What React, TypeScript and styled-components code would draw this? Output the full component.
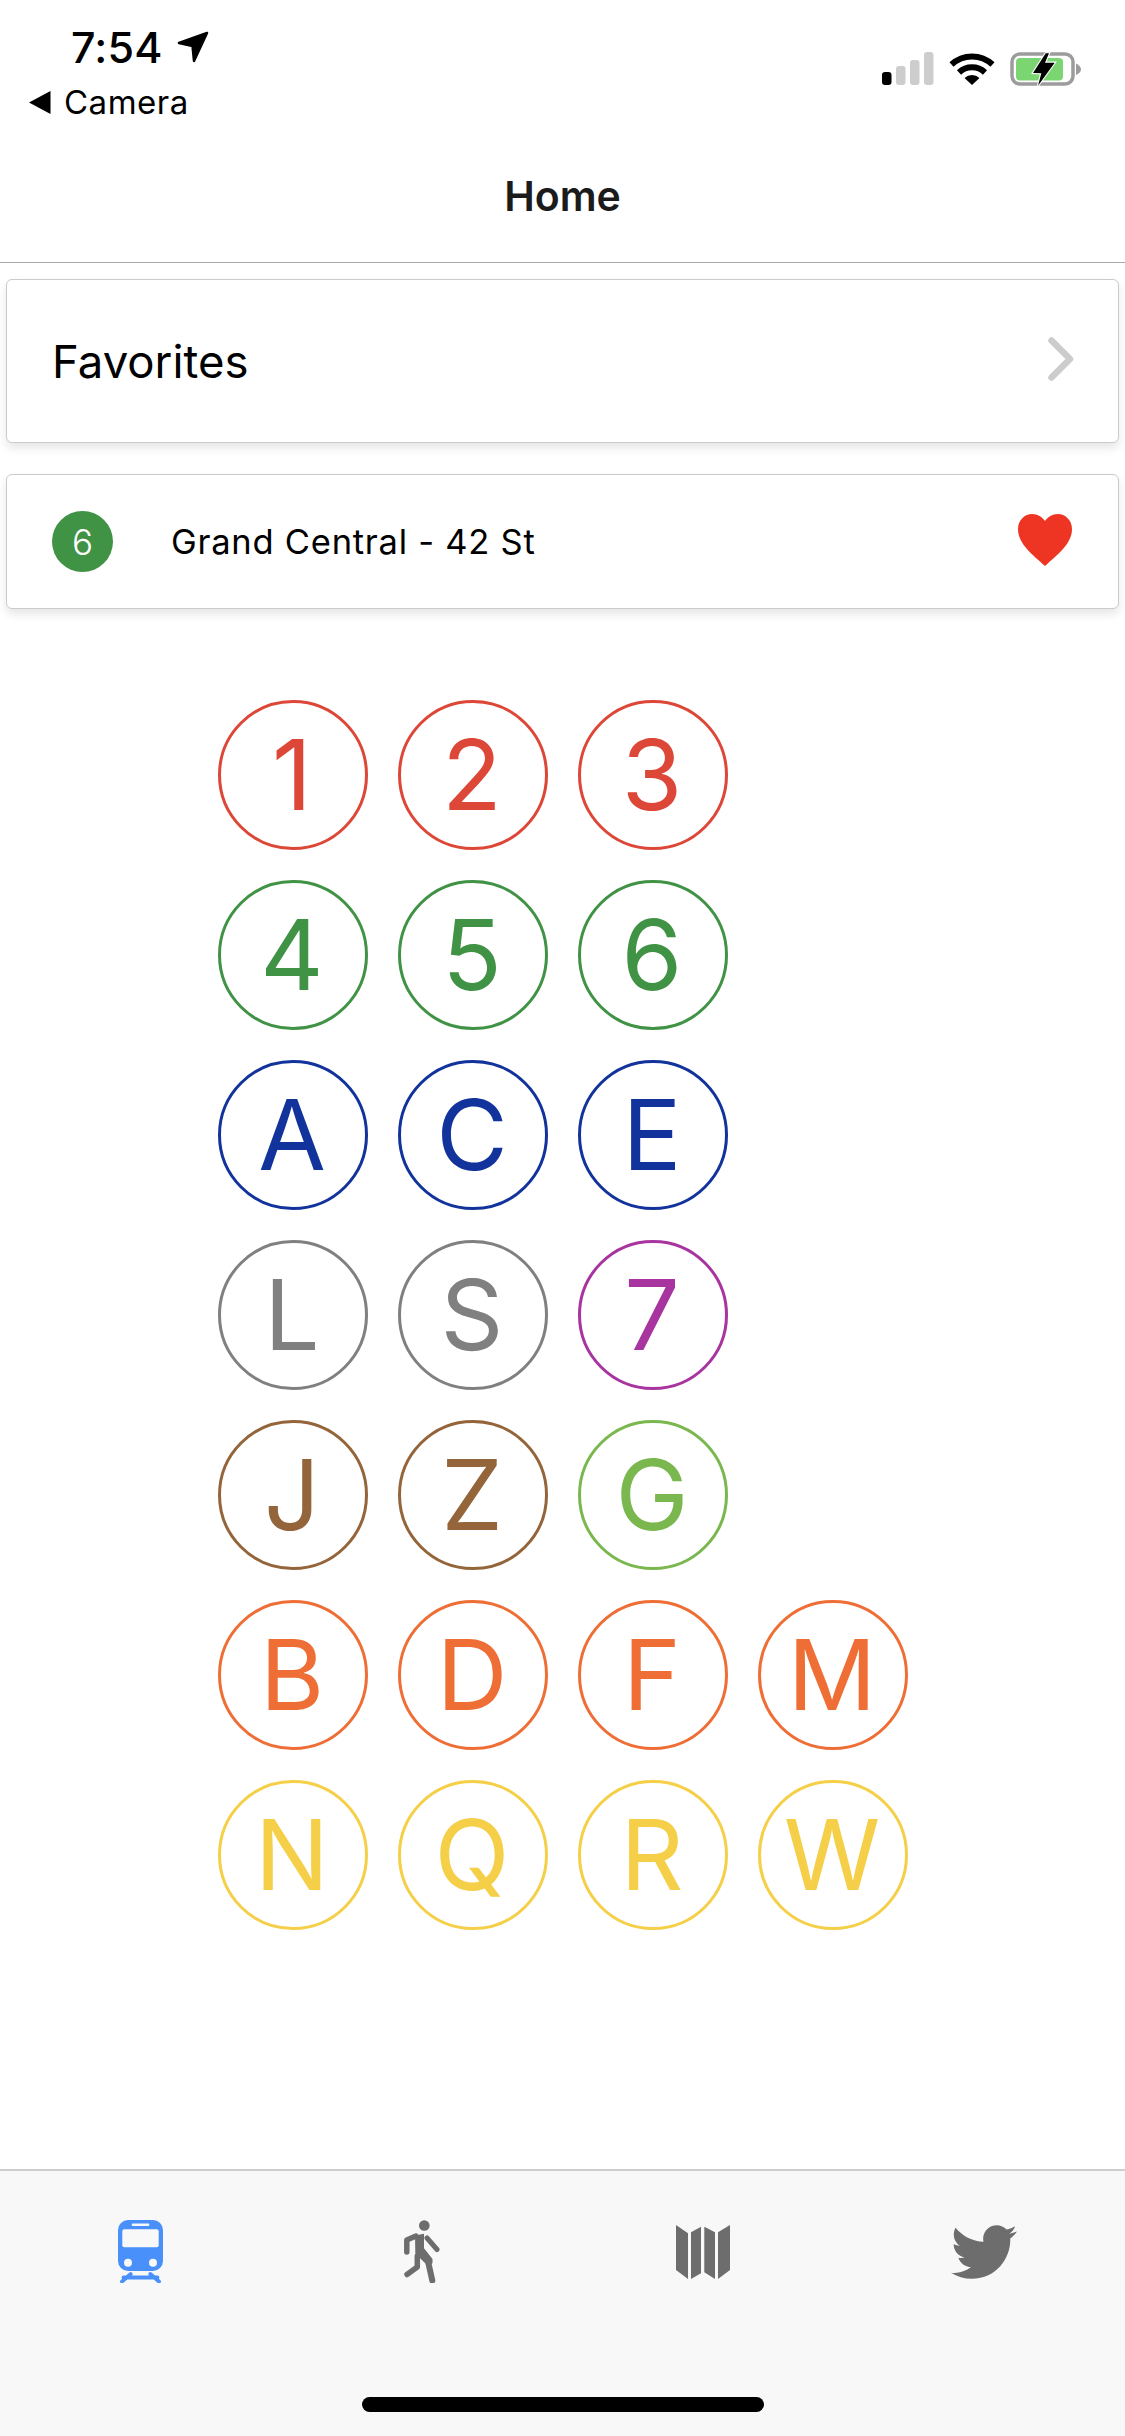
import React from "react";
import styled, { createGlobalStyle } from "styled-components";
import { FaTwitter } from "react-icons/fa";

const Global = createGlobalStyle`
  html, body { margin: 0; padding: 0; background: #fff; }
  body { font-family: Inter, "Liberation Sans", sans-serif; color: #000; }
`;

const Screen = styled.div`
  width: 1125px;
  height: 2436px;
  display: flex;
  flex-direction: column;
  overflow: hidden;
  background: #fff;
`;

const StatusBar = styled.div`
  height: 130px;
  display: flex;
  justify-content: space-between;
`;

const StatusLeft = styled.div`
  display: flex;
  flex-direction: column;
  padding: 21px 0 0 29px;
`;

const TimeRow = styled.div`
  display: flex;
  align-items: center;
  gap: 14px;
  height: 52px;
  padding-left: 42px;
`;

const Time = styled.span`
  font-size: 43px;
  font-weight: 550;
  letter-spacing: 0.2px;
  line-height: 52px;
`;

const BackRow = styled.div`
  display: flex;
  align-items: center;
  gap: 13px;
  height: 44px;
  margin-top: 7px;
`;

const BackLabel = styled.span`
  font-size: 33px;
  font-weight: 400;
  letter-spacing: 0.5px;
  line-height: 44px;
`;

const StatusRight = styled.div`
  display: flex;
  align-items: flex-start;
  gap: 15px;
  padding: 52px 41px 0 0;
`;

const Header = styled.header`
  height: 133px;
  display: flex;
  align-items: center;
  justify-content: center;
  border-bottom: 1.5px solid #a9a9a9;
  box-sizing: border-box;
`;

const Title = styled.h1`
  margin: 0;
  font-size: 41px;
  font-weight: 600;
  color: #1b1b1b;
`;

const Main = styled.main`
  flex: 1;
  display: flex;
  flex-direction: column;
  padding: 16px 6px 0;
`;

const Card = styled.div<{ $height: number; $gap: number }>`
  height: ${(p) => p.$height}px;
  margin-bottom: ${(p) => p.$gap}px;
  box-sizing: border-box;
  display: flex;
  align-items: center;
  background: #fff;
  border: 1.5px solid #cbcbcb;
  border-radius: 6px;
  box-shadow: 0 5px 10px rgba(0, 0, 0, 0.1);
`;

const FavoritesLabel = styled.span`
  flex: 1;
  padding-left: 45px;
  font-size: 45.5px;
  font-weight: 400;
`;

const Chevron = styled.svg`
  margin-right: 44px;
  margin-top: -4px;
`;

const Badge = styled.div`
  width: 61px;
  height: 61px;
  margin-left: 45px;
  border-radius: 50%;
  background: #409245;
  color: #fff;
  display: flex;
  align-items: center;
  justify-content: center;
  font-size: 35px;
  font-weight: 300;
`;

const StationName = styled.span`
  flex: 1;
  padding-left: 58px;
  font-size: 34.5px;
  letter-spacing: 0.75px;
  font-weight: 400;
`;

const Heart = styled.svg`
  margin-right: 46px;
  margin-top: -4px;
`;

const LineGrid = styled.div`
  display: flex;
  flex-direction: column;
  gap: 30px;
  padding: 91px 0 0 212px;
`;

const LineRow = styled.div`
  display: flex;
  gap: 30px;
`;

const LineCircle = styled.div<{ $color: string }>`
  width: 150px;
  height: 150px;
  box-sizing: border-box;
  padding-right: 2px;
  border-radius: 50%;
  border: 3px solid ${(p) => p.$color};
  color: ${(p) => p.$color};
  display: flex;
  align-items: center;
  justify-content: center;
  font-family: Inter, "Liberation Sans", sans-serif;
  font-size: 98px;
  font-weight: 430;
  line-height: 1;
`;

const TabBar = styled.nav`
  height: 267px;
  box-sizing: border-box;
  border-top: 2px solid #cdcdcd;
  background: #f8f8f8;
  display: flex;
  flex-direction: column;
`;

const TabRow = styled.div`
  display: grid;
  grid-template-columns: repeat(4, 1fr);
  height: 226px;
  padding-top: 49px;
  box-sizing: border-box;
`;

const Tab = styled.div`
  display: flex;
  justify-content: center;
  align-items: center;
  height: 63px;
  color: #6d6d6d;
`;

const HomeIndicator = styled.div`
  width: 402px;
  height: 15px;
  border-radius: 8px;
  background: #000;
  align-self: center;
`;

const LINES: { label: string; color: string }[][] = [
  [{ label: "1", color: "#dd4738" }, { label: "2", color: "#dd4738" }, { label: "3", color: "#dd4738" }],
  [{ label: "4", color: "#409245" }, { label: "5", color: "#409245" }, { label: "6", color: "#409245" }],
  [{ label: "A", color: "#12339b" }, { label: "C", color: "#12339b" }, { label: "E", color: "#12339b" }],
  [{ label: "L", color: "#808080" }, { label: "S", color: "#808080" }, { label: "7", color: "#a8359f" }],
  [{ label: "J", color: "#94653a" }, { label: "Z", color: "#94653a" }, { label: "G", color: "#7ab84f" }],
  [{ label: "B", color: "#ef6e36" }, { label: "D", color: "#ef6e36" }, { label: "F", color: "#ef6e36" }, { label: "M", color: "#ef6e36" }],
  [{ label: "N", color: "#f4cf47" }, { label: "Q", color: "#f4cf47" }, { label: "R", color: "#f4cf47" }, { label: "W", color: "#f4cf47" }],
];

const LocationArrow = () => (
  <svg width="32" height="32" viewBox="0 0 32 32">
    <path d="M30 2 L2 12 L15.5 15 L17 30 Z" fill="#000" stroke="#000" strokeWidth="2.5" strokeLinejoin="round" />
  </svg>
);

const BackTriangle = () => (
  <svg width="22" height="23" viewBox="0 0 22 23">
    <path d="M21.5 0 L0 11.5 L21.5 23 Z" fill="#000" />
  </svg>
);

const Signal = () => (
  <svg width="52" height="33" viewBox="0 0 52 33">
    <rect x="0" y="20" width="9.5" height="13" rx="3" fill="#000" />
    <rect x="14" y="14" width="9.5" height="19" rx="3" fill="#cdcdcd" />
    <rect x="28" y="8" width="9.5" height="25" rx="3" fill="#cdcdcd" />
    <rect x="42" y="0" width="9.5" height="33" rx="3" fill="#cdcdcd" />
  </svg>
);

const Wifi = () => (
  <svg width="46" height="33" viewBox="0 0 46 33">
    <path d="M2.5 12.5 A 30 30 0 0 1 43.5 12.5" fill="none" stroke="#000" strokeWidth="6" />
    <path d="M10 20.5 A 19 19 0 0 1 36 20.5" fill="none" stroke="#000" strokeWidth="6" />
    <path d="M15.5 26 A 11 11 0 0 1 30.5 26 L23 33 Z" fill="#000" />
  </svg>
);

const Battery = () => (
  <svg width="74" height="35" viewBox="0 0 74 35">
    <rect x="2" y="2" width="61" height="30" rx="8" fill="none" stroke="#9c9c9c" strokeWidth="3.5" />
    <rect x="6" y="6" width="47" height="22.5" rx="4" fill="#7bd672" />
    <path d="M66 11.5 L66 23 Q 71 20.5 71 17.5 Q 71 14 66 11.5 Z" fill="#9c9c9c" />
    <path
      d="M35.7 1.3 L23 21 L31.3 21.3 L28 33.7 L44.7 10.7 L35 10.7 L39 1.3 Z"
      fill="#000"
      stroke="#fff"
      strokeWidth="2.2"
      strokeLinejoin="miter"
      paintOrder="stroke"
    />
  </svg>
);

const TrainIcon = () => (
  <svg width="45" height="63" viewBox="0 0 45 63">
    <rect x="0" y="0" width="45" height="51" rx="10" fill="#4a90fb" />
    <rect x="4.3" y="9.3" width="36.4" height="18" rx="2" fill="#f8f8f8" />
    <rect x="13.7" y="3.5" width="17.6" height="2.4" rx="1" fill="#f8f8f8" />
    <circle cx="10" cy="42.7" r="4" fill="#f8f8f8" />
    <circle cx="35" cy="42.7" r="4" fill="#f8f8f8" />
    <path d="M5.5 57.5 H39.5 M12.7 54 L4 61.5 M32.3 54 L41 61.5" fill="none" stroke="#4a90fb" strokeWidth="3.8" strokeLinecap="round" />
  </svg>
);

const WalkIcon = () => (
  <svg width="36" height="63" viewBox="0 0 36 63" fill="none" stroke="#6d6d6d" strokeLinecap="round" strokeLinejoin="round">
    <circle cx="20.3" cy="5.5" r="5.3" fill="#6d6d6d" stroke="none" />
    <path d="M11 15.5 L20 13.7 L20 28.3 L28.5 39 L28.5 43 L24.5 46.5 L11.3 33.5 Z" fill="#6d6d6d" stroke="none" />
    <path d="M12 16 L2.8 20 L2.8 32" strokeWidth="5.5" />
    <path d="M23 18 L33 29.5" strokeWidth="5" />
    <path d="M24.5 43.5 L28.3 60.5" strokeWidth="6" />
    <path d="M13.3 36 L13.3 47 L3 54.5" strokeWidth="5.5" />
  </svg>
);

const MapIcon = () => (
  <svg width="54" height="54" viewBox="0 0 54 54" fill="#6d6d6d">
    <path d="M0 0 L12 8.3 L12 54 L0 45 Z" />
    <path d="M15 7.3 L25 1.7 L25 48.3 L15 54 Z" />
    <path d="M28.3 1.7 L39 7.3 L39 54 L28.3 47.3 Z" />
    <path d="M42 7.3 L54 0 L54 45 L42 54 Z" />
  </svg>
);

export default function App() {
  return (
    <Screen>
      <Global />
      <StatusBar>
        <StatusLeft>
          <TimeRow>
            <Time>7:54</Time>
            <LocationArrow />
          </TimeRow>
          <BackRow>
            <BackTriangle />
            <BackLabel>Camera</BackLabel>
          </BackRow>
        </StatusLeft>
        <StatusRight>
          <Signal />
          <Wifi />
          <Battery />
        </StatusRight>
      </StatusBar>
      <Header>
        <Title>Home</Title>
      </Header>
      <Main>
        <Card $height={164} $gap={31}>
          <FavoritesLabel>Favorites</FavoritesLabel>
          <Chevron width="26" height="44" viewBox="0 0 26 44">
            <path d="M3.5 3.5 L22 22 L3.5 40.5" fill="none" stroke="#cccccc" strokeWidth="6.5" strokeLinecap="round" strokeLinejoin="round" />
          </Chevron>
        </Card>
        <Card $height={135} $gap={0}>
          <Badge>6</Badge>
          <StationName>Grand Central - 42 St</StationName>
          <Heart width="54" height="52" viewBox="0 0 54 52">
            <path d="M27 52 C15 41 0 30 0 15 C0 6 7 0 14 0 C20 0 24 3 27 7 C30 3 34 0 40 0 C47 0 54 6 54 15 C54 30 39 41 27 52 Z" fill="#ee3524" />
          </Heart>
        </Card>
        <LineGrid>
          {LINES.map((row, i) => (
            <LineRow key={i}>
              {row.map((l) => (
                <LineCircle key={l.label} $color={l.color}>
                  {l.label}
                </LineCircle>
              ))}
            </LineRow>
          ))}
        </LineGrid>
      </Main>
      <TabBar>
        <TabRow>
          <Tab><TrainIcon /></Tab>
          <Tab><WalkIcon /></Tab>
          <Tab><MapIcon /></Tab>
          <Tab><FaTwitter size={66} /></Tab>
        </TabRow>
        <HomeIndicator />
      </TabBar>
    </Screen>
  );
}
